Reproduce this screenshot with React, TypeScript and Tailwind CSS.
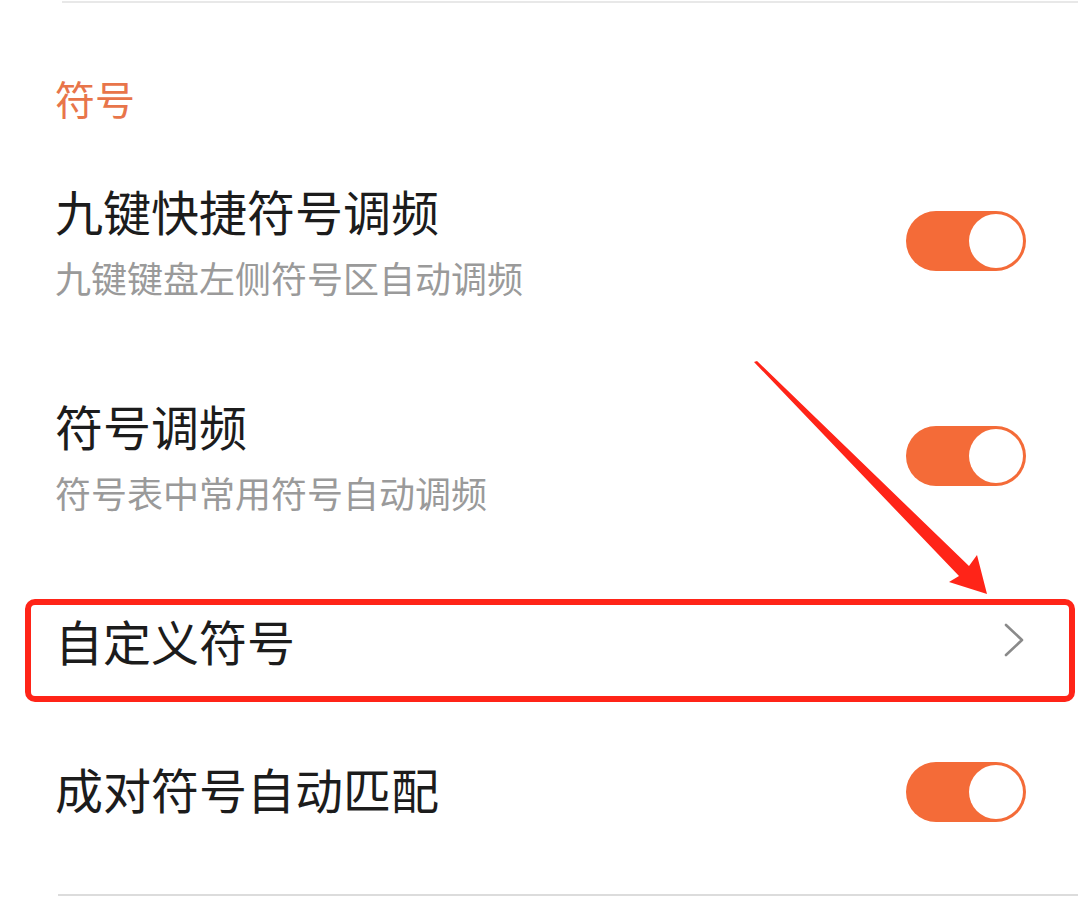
import React from "react";

const font = { fontFamily: '"Noto Sans CJK SC", "Noto Sans", sans-serif' };

// orange switch, always on in this screen
function Toggle() {
  return (
    <div className="w-[120px] h-[60px] rounded-full bg-[#f46b38] flex items-center justify-end pr-[3px] shrink-0">
      <div className="w-[54px] h-[54px] rounded-full bg-white" />
    </div>
  );
}

function SwitchRow({ title, desc, className = "" }: { title: string; desc?: string; className?: string }) {
  return (
    <div className={"flex justify-between pl-[55px] pr-[52px] " + (desc ? "items-center " : "items-start ") + className}>
      <div className={"flex flex-col " + (desc ? "" : "mt-[2px]")}>
        <div className="text-[48px] leading-[48px] text-[#1c1c1c]">{title}</div>
        {desc && <div className="mt-[25px] text-[36px] leading-[36px] text-[#9a9a9a]">{desc}</div>}
      </div>
      <Toggle />
    </div>
  );
}

export default function App() {
  return (
    <div className="relative w-[1078px] h-[898px] bg-white overflow-hidden" style={font}>
      <div className="ml-[62px] mt-[1px] h-[2px] bg-[#e8e8e8]" />

      <div className="pl-[55px] mt-[75px] text-[40px] leading-[40px] text-[#e8754a]">符号</div>

      <SwitchRow className="mt-[68px]" title="九键快捷符号调频" desc="九键键盘左侧符号区自动调频" />
      <SwitchRow className="mt-[106px]" title="符号调频" desc="符号表中常用符号自动调频" />

      <div className="mt-[89px] ml-[25px] mr-[3px] h-[103px] border-[6px] border-[#ff2418] rounded-[10px] flex items-center justify-between pl-[24px] pr-[44px] pb-[22px]">
        <div className="text-[48px] leading-[48px] text-[#1c1c1c]">自定义符号</div>
        <svg width="22" height="34" viewBox="0 0 22 34" fill="none">
          <path d="M3 2 L19 17 L3 32" stroke="#8a8a8a" strokeWidth="2.6" strokeLinecap="round" strokeLinejoin="round" />
        </svg>
      </div>

      <SwitchRow className="mt-[60px]" title="成对符号自动匹配" />

      <div className="ml-[58px] mt-[72px] h-[2px] bg-[#dcdcdc]" />

      {/* annotation arrow over the page */}
      <svg className="absolute left-0 top-0 pointer-events-none" width="1078" height="898" viewBox="0 0 1078 898">
        <polygon
          points="754,362 757,361 969,566 977,555 987,594 949,582 959,576"
          fill="#ff2418"
        />
      </svg>
    </div>
  );
}
